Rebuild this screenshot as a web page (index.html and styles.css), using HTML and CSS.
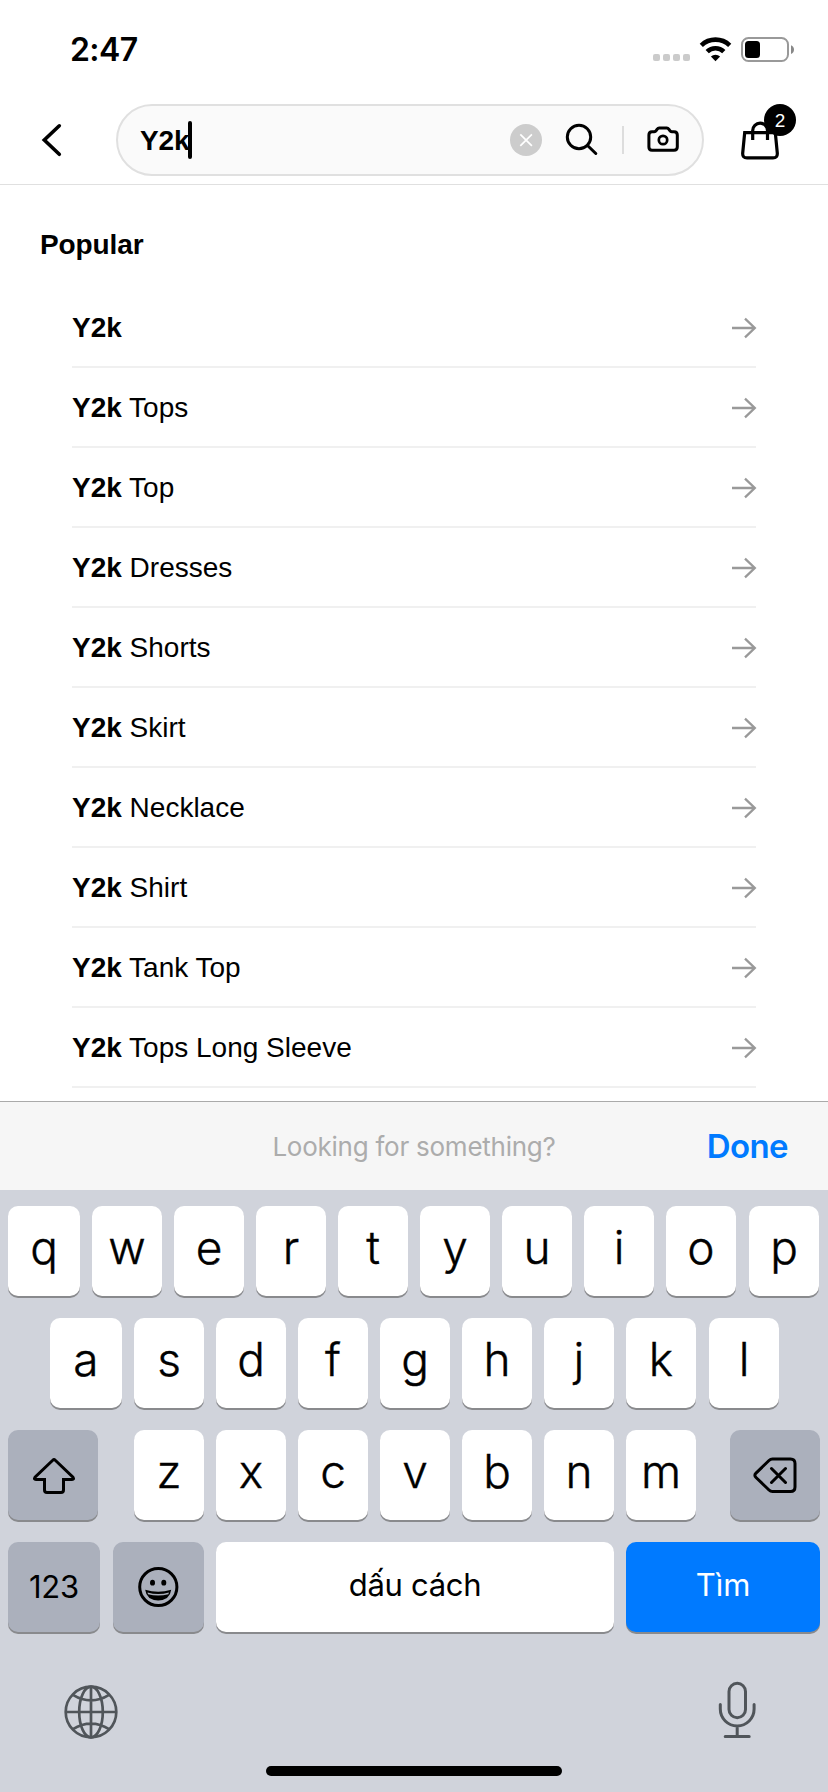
FILE: index.html
```html
<!DOCTYPE html>
<html lang="vi">
<head>
<meta charset="utf-8">
<title>Search</title>
<link rel="stylesheet" href="styles.css">
</head>
<body>
<div class="screen">
  <div class="status">
    <span class="time">2:47</span>
    <svg class="status-icons" width="144" height="30" viewBox="652 34 144 30">
      <g fill="#cbcbcb"><rect x="653" y="54" width="7" height="7" rx="2"/><rect x="663" y="54" width="7" height="7" rx="2"/><rect x="673" y="54" width="7" height="7" rx="2"/><rect x="683" y="54" width="7" height="7" rx="2"/></g>
      <g fill="none" stroke="#000" stroke-width="4.6"><path d="M701.3 45.3a20.5 20.5 0 0 1 28.4 0"/><path d="M707.2 51.6a11.8 11.8 0 0 1 16.6 0"/></g>
      <path d="M715.5 61.2l-4.6-4.7a6.8 6.8 0 0 1 9.2 0z"/>
      <rect x="742" y="38" width="46" height="23" rx="6.5" fill="none" stroke="#999" stroke-width="2"/>
      <rect x="745" y="41" width="15" height="17" rx="3.5"/>
      <path d="M791 45.2q3 1.3 3 4.4t-3 4.4z" fill="#888"/>
    </svg>
  </div>
  <header class="header">
    <svg class="back" width="24" height="40" viewBox="40 120 24 40"><path d="M59.3 125.8L44.3 140l15 14.3" fill="none" stroke="#000" stroke-width="3.6" stroke-linecap="round"/></svg>
    <div class="search">
      <span class="query">Y2k</span><span class="caret"></span>
      <svg class="search-icons" width="176" height="36" viewBox="508 122 176 36" fill="none" stroke="#000" stroke-width="3">
        <circle cx="526" cy="140" r="16" fill="#ccc" stroke="none"/>
        <path d="M520.3 134.3l11.6 11.6M531.9 134.3l-11.6 11.6" stroke="#fff" stroke-width="1.7"/>
        <circle cx="579" cy="137" r="11.7"/>
        <path d="M587.5 145.5l8.3 8" stroke-linecap="round"/>
        <path d="M623 126v28" stroke="#ddd" stroke-width="2"/>
        <path d="M652 131.8h2.2q1.3 0 2-1.2l1-1.5q.8-1.1 2-1.1h7.6q1.200 0 2 1.1l1 1.500q.7 1.200 2 1.200h2.200q3.300 0 3.300 3.200v12q0 3.200-3.300 3.200H652q-3.100 0-3.100-3.200v-12q0-3.200 3.100-3.200z"/>
        <circle cx="663" cy="140" r="4.200" stroke-width="2.700"/>
      </svg>
    </div>
    <div class="bag">
      <svg width="42" height="42" viewBox="739 120 42 42" fill="none" stroke="#000" stroke-width="3.200"><path d="M744.700 132.600h30.600l2 20.500q.3 4.800-4.300 4.800h-26q-4.600 0-4.300-4.800zM752.700 140v-9.500a7.200 7.200 0 0 1 14.800 0v9.500"/></svg>
      <span class="badge">2</span>
    </div>
  </header>
  <main class="results">
    <h2 class="title">Popular</h2>
    <ul class="list">
      <li class="row"><span><b>Y2k</b></span><svg class="arrow"><use href="#arrow"/></svg></li>
      <li class="row"><span><b>Y2k</b> Tops</span><svg class="arrow"><use href="#arrow"/></svg></li>
      <li class="row"><span><b>Y2k</b> Top</span><svg class="arrow"><use href="#arrow"/></svg></li>
      <li class="row"><span><b>Y2k</b> Dresses</span><svg class="arrow"><use href="#arrow"/></svg></li>
      <li class="row"><span><b>Y2k</b> Shorts</span><svg class="arrow"><use href="#arrow"/></svg></li>
      <li class="row"><span><b>Y2k</b> Skirt</span><svg class="arrow"><use href="#arrow"/></svg></li>
      <li class="row"><span><b>Y2k</b> Necklace</span><svg class="arrow"><use href="#arrow"/></svg></li>
      <li class="row"><span><b>Y2k</b> Shirt</span><svg class="arrow"><use href="#arrow"/></svg></li>
      <li class="row"><span><b>Y2k</b> Tank Top</span><svg class="arrow"><use href="#arrow"/></svg></li>
      <li class="row"><span><b>Y2k</b> Tops Long Sleeve</span><svg class="arrow"><use href="#arrow"/></svg></li>
    </ul>
  </main>
  <div class="toolbar"><span class="hint">Looking for something?</span><span class="done">Done</span></div>
  <div class="keyboard">
    <div class="keys">
      <span class="key wide">q</span><span class="key">w</span><span class="key">e</span><span class="key">r</span><span class="key">t</span><span class="key">y</span><span class="key">u</span><span class="key">i</span><span class="key">o</span><span class="key last">p</span>
    </div>
    <div class="keys second">
      <span class="key wide">a</span><span class="key">s</span><span class="key">d</span><span class="key">f</span><span class="key">g</span><span class="key">h</span><span class="key">j</span><span class="key">k</span><span class="key last">l</span>
    </div>
    <div class="keys">
      <span class="key fn shift"><svg width="46" height="42" viewBox="30 1454 46 42"><path d="M53 1460q1-1 2 0l18 17.200q1.500 2.300-1 2.300h-8.500v10.500q0 2.500-2.500 2.500h-14q-2.500 0-2.500-2.500v-10.500H36q-2.500 0-1-2.300z" fill="none" stroke="#000" stroke-width="3"/></svg></span>
      <span class="key">z</span><span class="key">x</span><span class="key">c</span><span class="key">v</span><span class="key">b</span><span class="key">n</span><span class="key">m</span>
      <span class="key fn delete"><svg width="46" height="42" viewBox="752 1454.500 46 42"><path d="M772.500 1459.500h18q4.500 0 4.500 4.500v23.500q0 4.500-4.500 4.500h-18q-2 0-3.500-1.500l-13-12.500q-2.300-2.200 0-4.400l13-12.600q1.500-1.500 3.500-1.500zM771.500 1469l14 14M785.500 1469l-14 14" fill="none" stroke="#000" stroke-width="3" stroke-linecap="round"/></svg></span>
    </div>
    <div class="keys bottom">
      <span class="key fn num">123</span>
      <span class="key fn emoji"><svg width="42" height="42" viewBox="137.500 1566 42 42"><circle cx="157.800" cy="1587" r="18.600" fill="none" stroke="#000" stroke-width="3"/><ellipse cx="152" cy="1582.700" rx="2.500" ry="2.900"/><ellipse cx="163.300" cy="1582.700" rx="2.500" ry="2.900"/><path d="M144.700 1589.800q13 3.800 26 0q-1.200 10.200-13 10.700q-11.800-.5-13-10.700z"/><path d="M147 1592.400q10.700 3 21.400 0l-.5 1.800q-10.200 2.600-20.400 0z" fill="#abb0bc"/></svg></span>
      <span class="key space">dấu cách</span>
      <span class="key go">Tìm</span>
    </div>
    <div class="system">
      <svg class="globe" width="56" height="56" viewBox="62.600 1684.400 56 56" fill="none" stroke="#50555a" stroke-width="2.700"><circle cx="90.600" cy="1712.400" r="25.300"/><ellipse cx="90.600" cy="1712.400" rx="11.800" ry="25.300"/><path d="M90.600 1687v51M65.300 1712.400h50.600M72.500 1695.300q18.100 11 36.200 0M72.500 1729.500q18.100-11 36.200 0"/></svg>
      <svg width="40" height="60" viewBox="717.300 1680 40 60" fill="none" stroke="#50555a" stroke-width="3" stroke-linecap="round"><rect x="729.300" y="1683.300" width="16.500" height="34.400" rx="8.250"/><path d="M720.600 1704.500v4.500a16.900 16.900 0 0 0 33.800 0v-4.500M737.500 1726v10M725.500 1736.400h24"/></svg>
    </div>
    <div class="home"></div>
  </div>
</div>
<svg class="defs"><symbol id="arrow" viewBox="731 1036 26 24"><path d="M732 1048h22.500M745 1038.700l9.800 9.300-9.800 9.300" fill="none" stroke="#999" stroke-width="2.300"/></symbol></svg>
</body>
</html>
```
FILE: styles.css
```css
* { box-sizing: border-box; }
body { margin: 0; background: #fff; color: #000; font-family: "Liberation Sans", Arial, sans-serif; }
svg { display: block; flex: none; }
.defs { display: none; }
.screen { width: 828px; height: 1792px; overflow: hidden; display: flex; flex-direction: column; }
.screen > * { flex: none; }

.status { height: 96px; padding: 30px 32px 0 70px; display: flex; justify-content: space-between; font-family: Inter, sans-serif; }
.time { font-size: 32px; line-height: 40px; font-weight: 600; letter-spacing: -0.6px; }
.status-icons { margin-top: 4px; }

.header { height: 89px; padding: 8px 0 0 40px; display: flex; border-bottom: 1px solid #e0e0e0; }
.back { margin-top: 16px; }
.search { width: 588px; height: 72px; margin-left: 52px; padding: 0 18px 0 22px; display: flex; align-items: center; border: 2px solid #e0e0e0; border-radius: 36px; background: #fafafa; }
.query { width: 48px; padding-top: 1px; font-size: 28px; line-height: 36px; font-weight: 700; letter-spacing: -0.1px; }
.caret { width: 4px; height: 38px; border-radius: 2px; background: #000; }
.search-icons { margin-left: auto; }
.bag { position: relative; margin: 16px 0 0 35px; width: 42px; height: 42px; }
.badge { position: absolute; left: 25px; top: -16px; width: 32px; height: 32px; border-radius: 50%; background: #000; color: #fff; font-size: 19px; line-height: 33px; text-align: center; }

.results { height: 916px; padding-top: 42px; }
.title { margin: 0 0 25px 40px; font-size: 28px; line-height: 36px; font-weight: 700; letter-spacing: -0.1px; }
.list { list-style: none; margin: 0 72px; padding: 0; }
.row { height: 80px; padding-top: 2px; display: flex; align-items: center; justify-content: space-between; border-bottom: 2px solid #f0f0f0; font-size: 28px; line-height: 36px; }
.arrow { width: 26px; height: 24px; margin-right: -1px; }

.toolbar { height: 89px; display: grid; grid-template-columns: 1fr auto 1fr; align-items: center; padding: 0 40px; border-top: 1px solid #aaa; background: #f6f6f6; font-family: Inter, sans-serif; }
.hint { grid-column: 2; font-size: 26px; letter-spacing: -0.25px; color: #acacac; }
.done { justify-self: end; font-size: 33px; font-weight: 600; letter-spacing: -0.6px; color: #007aff; }

.keyboard { height: 602px; padding: 16px 8px 0; display: flex; flex-direction: column; background: #d0d3db; font-family: Inter, sans-serif; }
.keys { height: 90px; margin-bottom: 22px; display: flex; gap: 12px; }
.second { padding-left: 42px; }
.key { width: 70px; height: 90px; flex: none; display: flex; align-items: center; justify-content: center; padding-bottom: 8px; border-radius: 10px; background: #fff; box-shadow: 0 2px 0 #898a8d; font-size: 46px; line-height: 60px; font-weight: 300; -webkit-text-stroke: 0.4px currentColor; }
.wide { width: 72px; }
.last { margin-left: 1px; }
.fn { background: #abb0bc; padding-bottom: 0; }
.shift { width: 90px; margin-right: 24px; }
.delete { width: 90px; margin-left: 22px; }
.num, .space, .go { font-size: 31px; font-weight: 400; -webkit-text-stroke: 0; }
.num { width: 92px; letter-spacing: -0.2px; }
.emoji { width: 91px; margin-left: 1px; }
.space { width: 398px; padding-bottom: 5px; letter-spacing: -0.3px; }
.go { width: 194px; padding-bottom: 5px; background: #007aff; color: #fff; }
.system { height: 60px; margin-top: 26px; padding: 0 62.700px 0 54.600px; display: flex; justify-content: space-between; align-items: center; }
.globe { margin-top: 4px; }
.home { width: 296px; height: 10px; margin: 26px auto 0; border-radius: 5px; background: #000; }
```
